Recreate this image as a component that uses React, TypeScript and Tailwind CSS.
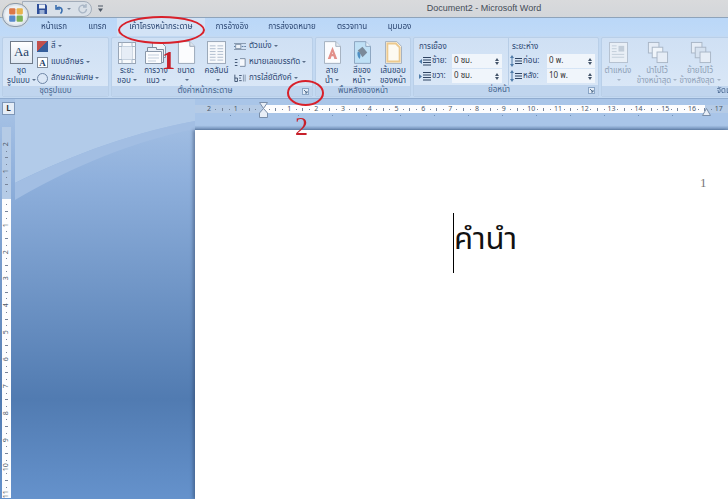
const thai = "font-['Tahoma','Noto_Sans_Thai','Noto_Sans','Liberation_Sans',sans-serif]"

const tabs = [
  { label: 'หน้าแรก', w: 'w-[48px]' },
  { label: 'แทรก', w: 'w-[39px]' },
  { label: 'เค้าโครงหน้ากระดาษ', w: 'w-[88px]' },
  { label: 'การอ้างอิง', w: 'w-[54px]' },
  { label: 'การส่งจดหมาย', w: 'w-[66px]' },
  { label: 'ตรวจทาน', w: 'w-[54px]' },
  { label: 'มุมมอง', w: 'w-[41px]' },
]

const hLabels = ['2', '1', '', '1', '2', '3', '4', '5', '6', '7', '8', '9', '10', '11', '12', '13', '14', '15', '16']
const vLabels = ['2', '1', '', '1', '2', '3', '4', '5', '6', '7', '8', '9', '10']

function MarginsIcon() {
  return (
    <svg viewBox="0 0 18 22" className="h-[22px] w-[18px]">
      <rect x="0.5" y="0.5" width="17" height="21" fill="#f7f9fc" stroke="#98a5b6" />
      <path d="M0.5 4.5h17M0.5 17.5h17M4 0.5v21M14 0.5v21" stroke="#a8b8ca" />
      <rect x="4" y="4.5" width="10" height="13" fill="#e6edf6" />
    </svg>
  )
}

function OrientationIcon() {
  return (
    <svg viewBox="0 0 24 24" className="h-[24px] w-[24px]">
      <path d="M8.5 1.5h9l4 4v11h-13z" fill="#f1f5fa" stroke="#8b99ab" />
      <path d="M3.5 6.5h9v2h7v13h-16z" fill="#e9eff7" stroke="#7f8c9e" />
      <path d="M1.5 10.5h16v12h-16z" fill="#fbfcfe" stroke="#8b99ab" />
      <path d="M4 14h11M4 17h11M4 20h8" stroke="#c3cfdd" />
    </svg>
  )
}

function SizeIcon() {
  return (
    <svg viewBox="0 0 20 24" className="h-[23px] w-[19px]">
      <path d="M1.5 0.5h12l5 5v18h-17z" fill="#fbfcfe" stroke="#98a5b6" />
      <path d="M13.5 0.5v5h5" fill="#dde5ef" stroke="#98a5b6" />
    </svg>
  )
}

function ColumnsIcon() {
  return (
    <svg viewBox="0 0 20 24" className="h-[23px] w-[19px]">
      <rect x="0.5" y="0.5" width="19" height="23" fill="#f7f9fc" stroke="#98a5b6" />
      <path d="M3 5h6M11 5h6M3 8h6M11 8h6M3 11h6M11 11h6M3 14h6M11 14h6M3 17h6M11 17h6M3 20h6M11 20h6" stroke="#aebccd" />
    </svg>
  )
}

function WatermarkIcon() {
  return (
    <svg viewBox="0 0 18 24" className="h-[23px] w-[17px]">
      <path d="M0.5 0.5h12l5 5v18h-17z" fill="#fbfcfe" stroke="#a2aebd" />
      <path d="M12.5 0.5v5h5" fill="#e3e9f1" stroke="#a2aebd" />
      <path d="M4 19L9 6l5 13h-3l-1-3H8l-1 3zM8.6 13.5h.9L9 11.5z" fill="#e2908a" />
    </svg>
  )
}

function PageColorIcon() {
  return (
    <svg viewBox="0 0 18 24" className="h-[23px] w-[17px]">
      <path d="M0.5 0.5h12l5 5v18h-17z" fill="#bfe0f5" stroke="#8aa3bd" />
      <path d="M12.5 0.5v5h5" fill="#e6f1fa" stroke="#8aa3bd" />
      <path d="M4 10l5-4 5 6-5 5z" fill="#7b8a99" />
      <path d="M4 11c-1 3 0 6 2 8 1-2 1-5 0-7z" fill="#4e8fc4" />
    </svg>
  )
}

function BorderIcon() {
  return (
    <svg viewBox="0 0 18 24" className="h-[23px] w-[17px]">
      <path d="M0.5 0.5h12l5 5v18h-17z" fill="#fdfaf2" stroke="#a2aebd" />
      <path d="M2.5 2.5h9l4 4v15h-13z" fill="none" stroke="#ecc98e" strokeWidth="2" />
    </svg>
  )
}

function LayeredIcon({ front }: { front: boolean }) {
  return (
    <svg viewBox="0 0 24 24" className="h-[23px] w-[23px]">
      <rect x="2.5" y="1.5" width="11" height="11" fill="#e6edf6" stroke="#a9b6c6" />
      <rect x="6.5" y="6.5" width="11" height="11" fill={front ? '#f0f5fa' : '#d6e2f0'} stroke="#a9b6c6" />
      <rect x="11.5" y="11.5" width="11" height="11" fill="#e6edf6" stroke="#a9b6c6" />
    </svg>
  )
}

function PositionIcon() {
  return (
    <svg viewBox="0 0 20 22" className="h-[21px] w-[19px]">
      <rect x="0.5" y="0.5" width="19" height="21" fill="#e9eff6" stroke="#b4c0cf" />
      <rect x="10" y="4" width="6" height="6" fill="#c2cdd9" />
      <path d="M3 4h5M3 7h5M3 10h5M3 13h13M3 16h13" stroke="#c2cdd9" />
    </svg>
  )
}

function IndentIcon({ right }: { right?: boolean }) {
  return (
    <svg viewBox="0 0 12 11" className="h-[11px] w-[12px]">
      <path d="M4 1.5h8M4 4h8M4 6.5h8M4 9h8" stroke="#2f4462" />
      <path d={right ? 'M0 3l3 2.5L0 8z' : 'M3 3L0 5.5 3 8z'} fill="#4f7ba8" />
    </svg>
  )
}

function SpacingIcon() {
  return (
    <svg viewBox="0 0 12 12" className="h-[12px] w-[12px]">
      <path d="M5 3.5h7M5 6h7M5 8.5h7" stroke="#2f4462" />
      <path d="M2 0l2 3H0zM2 12l2-3H0z" fill="#4f7ba8" />
      <path d="M2 3v6" stroke="#4f7ba8" />
    </svg>
  )
}

function Caret({ faded }: { faded?: boolean }) {
  return (
    <span
      className={`ml-[2px] inline-block h-0 w-0 border-x-[2px] border-t-[2px] border-x-transparent align-middle ${faded ? 'border-t-[#a5b4c6]' : 'border-t-[#5b6f8a]'}`}
    />
  )
}

// "▾" at the end of a label is drawn as a small caret
function Label({ text, faded }: { text: string; faded?: boolean }) {
  const hasCaret = text.endsWith('▾')
  return (
    <>
      {hasCaret ? text.slice(0, -1).trim() : text}
      {hasCaret && <Caret faded={faded} />}
    </>
  )
}

function GroupLabel({ text, launcher }: { text: string; launcher?: boolean }) {
  return (
    <div className={`relative h-[11px] bg-[#c0d5ee] text-center text-[8px] leading-[11px] text-[#46658f] ${launcher ? 'pr-[14px]' : ''}`}>
      {text}
      {launcher && (
        <svg viewBox="0 0 7 7" className="absolute right-[3px] top-[2px] h-[7px] w-[7px]">
          <rect x="0.5" y="0.5" width="6" height="6" fill="#e3ecf7" stroke="#8ba6c6" />
          <path d="M2 2l3 3M5 3v2H3" stroke="#54708f" fill="none" />
        </svg>
      )}
    </div>
  )
}

function Group({ w, label, launcher, children }: { w: string; label: string; launcher?: boolean; children: React.ReactNode }) {
  return (
    <div className={`${w} flex h-[60px] shrink-0 flex-col overflow-hidden rounded-[2px] border border-[#b9cfe8] bg-[linear-gradient(#cfe0f4,#dbe8f7)]`}>
      <div className="flex flex-1 px-[3px]">{children}</div>
      <GroupLabel text={label} launcher={launcher} />
    </div>
  )
}

function BigButton({ w, icon, lines, faded }: { w: string; icon: React.ReactNode; lines: string[]; faded?: boolean }) {
  return (
    <div className={`${w} flex shrink-0 flex-col items-center text-[8px] leading-[9.5px] ${faded ? 'text-[#8fa1b6]' : 'text-[#2b4672]'}`}>
      <div className="flex h-[29px] shrink-0 items-center">{icon}</div>
      {lines.map((l) => (
        <div key={l} className="whitespace-nowrap">
          <Label text={l} faded={faded} />
        </div>
      ))}
    </div>
  )
}

function SpinField({ icon, label, value, w, lw }: { icon: React.ReactNode; label: string; value: string; w: string; lw: string }) {
  return (
    <div className="flex h-[14px] items-center text-[8px] text-[#2b4672]">
      <span className="flex w-[13px] items-center">{icon}</span>
      <span className={`${lw} whitespace-nowrap`}>{label}</span>
      <div className={`${w} flex h-[14px] items-center justify-between bg-[#f0f5fb] pl-[2px] pr-[3px] text-[#333]`}>
        <span>{value}</span>
        <span className="flex flex-col gap-[1px]">
          <span className="h-0 w-0 border-x-[2px] border-b-[3px] border-x-transparent border-b-[#44546a]" />
          <span className="h-0 w-0 border-x-[2px] border-t-[3px] border-x-transparent border-t-[#44546a]" />
        </span>
      </div>
    </div>
  )
}

function SmallRow({ icon, text }: { icon: React.ReactNode; text: string }) {
  return (
    <div className="flex h-[16px] items-center gap-[3px] whitespace-nowrap text-[8px] text-[#2b4672]">
      {icon}
      <span>
        <Label text={text} />
      </span>
    </div>
  )
}

function HRuler() {
  return (
    <div className="flex h-[8px] overflow-hidden bg-[linear-gradient(to_right,#b5cbe6_68px,#fdfdfe_68px,#fdfdfe_510px,#b5cbe6_510px)] pl-[10.65px] text-[7px] leading-[8px] text-[#4d5a6b]">
      {hLabels.map((n, i) => (
        <div key={i} className="flex w-[26.8px] shrink-0 items-center text-center">
          <span className="w-1/4">{n}</span>
          <span className="flex w-1/4 justify-center"><span className="h-[1px] w-[1px] bg-[#77849a]" /></span>
          <span className="flex w-1/4 justify-center"><span className="h-[3px] w-[1px] bg-[#77849a]" /></span>
          <span className="flex w-1/4 justify-center"><span className="h-[1px] w-[1px] bg-[#77849a]" /></span>
        </div>
      ))}
      <span className="w-[7px] shrink-0 text-center">17</span>
    </div>
  )
}

function VRuler() {
  return (
    <div className="ml-[2px] flex h-[371px] w-[9px] flex-col items-center overflow-hidden bg-[linear-gradient(#b5cbe6_72px,#fdfdfe_72px)] pt-[14px] text-[7px] leading-[7px] text-[#4d5a6b]">
      {vLabels.map((n, i) => (
        <div key={i} className="flex h-[26.9px] w-full shrink-0 flex-col items-center">
          <span className="flex h-[6.7px] items-center -rotate-90">{n}</span>
          <span className="flex h-[6.7px] items-center"><span className="h-[1px] w-[1px] bg-[#77849a]" /></span>
          <span className="flex h-[6.7px] items-center"><span className="h-[1px] w-[3px] bg-[#77849a]" /></span>
          <span className="flex h-[6.7px] items-center"><span className="h-[1px] w-[1px] bg-[#77849a]" /></span>
        </div>
      ))}
      <span className="flex h-[6.7px] items-center -rotate-90">11</span>
    </div>
  )
}

export default function App() {
  return (
    <div className={`relative flex h-[499px] w-[728px] flex-col overflow-hidden bg-[#6490cb] ${thai}`}>
      {/* Title bar */}
      <div className="flex h-[18px] shrink-0 items-center justify-center border-b border-[#8ea3ba] bg-[linear-gradient(#d9dadc,#d3d6da)] pl-[240px] font-['Liberation_Sans',sans-serif] text-[9px] text-[#444c57]">
        Document2 - Microsoft Word
      </div>

      {/* Tabs */}
      <div className="flex h-[18px] shrink-0 items-center bg-[linear-gradient(#bad7f8,#c0daf7)] pl-[30px] text-[8px] text-[#2b4672] blur-[0.3px]">
        {tabs.map((t, i) => (
          <div
            key={t.label}
            className={`${t.w} flex h-full items-center justify-center whitespace-nowrap ${i === 2 ? 'bg-[#d3e3f6]' : ''}`}
          >
            {t.label}
          </div>
        ))}
      </div>

      {/* Ribbon */}
      <div className="flex h-[63px] shrink-0 gap-[2px] border-b border-[#90acd0] bg-[#c3d9f2] pl-[2px] pt-[1px] blur-[0.3px]">
        <Group w="w-[107px]" label="ชุดรูปแบบ">
          <BigButton
            w="w-[31px]"
            lines={['ชุด', 'รูปแบบ ▾']}
            icon={
              <div className="h-[23px] w-[23px] border border-[#6f7a89] bg-[linear-gradient(#fff,#dfe8f3)] text-center font-['Liberation_Serif',serif] text-[13px] leading-[20px] text-[#243f68]">
                Aa
              </div>
            }
          />
          <div className="flex flex-col">
            <SmallRow text="สี ▾" icon={<span className="h-[11px] w-[11px] bg-[linear-gradient(135deg,#c0504d_50%,#365f9c_50%)]" />} />
            <SmallRow text="แบบอักษร ▾" icon={<span className="h-[11px] w-[11px] border border-[#7f8a99] bg-white text-center font-['Liberation_Serif',serif] text-[9px] font-bold leading-[10px] text-[#243f68]">A</span>} />
            <SmallRow text="ลักษณะพิเศษ ▾" icon={<span className="h-[11px] w-[11px] rounded-full border border-[#6f86a6] bg-[#dbe7f6]" />} />
          </div>
        </Group>

        <Group w="w-[202px]" label="ตั้งค่าหน้ากระดาษ" launcher>
          <BigButton w="w-[24px]" lines={['ระยะ', 'ขอบ ▾']} icon={<MarginsIcon />} />
          <BigButton w="w-[34px]" lines={['การวาง', 'แนว ▾']} icon={<OrientationIcon />} />
          <BigButton w="w-[26px]" lines={['ขนาด', '▾']} icon={<SizeIcon />} />
          <BigButton w="w-[35px]" lines={['คอลัมน์', '▾']} icon={<ColumnsIcon />} />
          <div className="flex flex-col">
            <SmallRow
              text="ตัวแบ่ง ▾"
              icon={
                <svg viewBox="0 0 14 11" className="h-[11px] w-[12px]">
                  <path d="M0 2h14M0 9h14" stroke="#7e90a6" />
                  <path d="M0 5.5h14" stroke="#4f6f96" strokeDasharray="2 1" />
                  <rect x="2" y="3" width="6" height="5" fill="#eef3f9" stroke="#7e90a6" />
                </svg>
              }
            />
            <SmallRow
              text="หมายเลขบรรทัด ▾"
              icon={
                <svg viewBox="0 0 14 11" className="h-[11px] w-[12px]">
                  <path d="M1 2h3M1 5.5h3M1 9h3" stroke="#2f4462" />
                  <path d="M7 1h6v9H7" fill="#f5f8fc" stroke="#6e8098" />
                </svg>
              }
            />
            <SmallRow
              text="การใส่ยัติภังค์ ▾"
              icon={
                <svg viewBox="0 0 14 11" className="h-[11px] w-[12px]">
                  <path d="M1 1v8h3V5H1M6 2h3M6 5h2M6 8h3" stroke="#2f4462" fill="none" />
                  <path d="M11 1v8M13 1v8" stroke="#7e90a6" />
                </svg>
              }
            />
          </div>
        </Group>

        <Group w="w-[96px]" label="พื้นหลังของหน้า">
          <BigButton w="w-[26px]" lines={['ลาย', 'น้ำ ▾']} icon={<WatermarkIcon />} />
          <BigButton w="w-[34px]" lines={['สีของ', 'หน้า ▾']} icon={<PageColorIcon />} />
          <BigButton w="w-[28px]" lines={['เส้นขอบ', 'ของหน้า']} icon={<BorderIcon />} />
        </Group>

        <Group w="w-[186px]" label="ย่อหน้า" launcher>
          <div className="flex w-[89px] shrink-0 flex-col pl-[2px] pt-[3px]">
            <div className="h-[13px] text-[8px] leading-[12px] text-[#2b4672]">การเยื้อง</div>
            <div className="flex flex-col gap-[1px]">
              <SpinField icon={<IndentIcon />} label="ซ้าย:" value="0 ซม." w="w-[50px]" lw="w-[20px]" />
              <SpinField icon={<IndentIcon right />} label="ขวา:" value="0 ซม." w="w-[50px]" lw="w-[20px]" />
            </div>
          </div>
          <div className="ml-[2px] flex flex-col border-l border-[#b7cde6] pl-[1px] pt-[3px]">
            <div className="h-[13px] pl-[2px] text-[8px] leading-[12px] text-[#2b4672]">ระยะห่าง</div>
            <div className="flex flex-col gap-[1px]">
              <SpinField icon={<SpacingIcon />} label="ก่อน:" value="0 พ." w="w-[48px]" lw="w-[24px]" />
              <SpinField icon={<SpacingIcon />} label="หลัง:" value="10 พ." w="w-[48px]" lw="w-[24px]" />
            </div>
          </div>
        </Group>

        <Group w="w-[256px]" label="จัดเรียง">
          <BigButton faded w="w-[26px]" lines={['ตำแหน่ง', '▾']} icon={<PositionIcon />} />
          <BigButton faded w="w-[52px]" lines={['นำไปไว้', 'ข้างหน้าสุด ▾']} icon={<LayeredIcon front />} />
          <BigButton faded w="w-[34px]" lines={['ย้ายไปไว้', 'ข้างหลังสุด ▾']} icon={<LayeredIcon front={false} />} />
        </Group>
      </div>

      {/* Document area */}
      <div className="relative flex flex-1 overflow-hidden bg-[linear-gradient(#a9c4e6_0%,#8fb0dc_20%,#517bb1_75%,#6592cc_100%)]">
        <svg viewBox="0 0 195 130" preserveAspectRatio="none" className="absolute left-0 top-0 h-[130px] w-[195px]">
          <path d="M15 0H195V22C120 36 60 62 15 84Z" fill="#b2cbe9" />
          <path d="M15 84C60 62 120 36 195 22V30C120 45 60 75 15 101Z" fill="#a2bee3" />
        </svg>

        <div className="relative flex w-[195px] shrink-0 flex-col">
          <div className="ml-[2px] mt-[3px] flex h-[13px] w-[13px] items-center justify-center border border-[#7e97b8] bg-[#e5edf7] text-[8px] font-bold leading-none text-[#333]">
            L
          </div>
          <div className="mt-[12px]">
            <VRuler />
          </div>
        </div>

        <div className="relative flex min-w-0 flex-1 flex-col">
          <div className="h-[31px] shrink-0 bg-[linear-gradient(#a9c5e8_85%,#6f8fb8_100%)] pt-[6px]">
            <HRuler />
            <div className="ml-[1.5px] mt-[2px] h-[1px] w-[478px] bg-[repeating-linear-gradient(to_right,transparent_0,transparent_33px,#6f8fb8_33px,#6f8fb8_34px)]" />
          </div>
          <div className="flex-1 bg-white pl-[258px] pt-[83px] shadow-[-2px_0_3px_rgba(40,60,90,0.45)]">
            <div className="relative -top-[37px] left-[247px] h-0 font-['Liberation_Serif',serif] text-[13px] leading-[14px] text-[#777]">1</div>
            <div className="h-[60px] w-fit border-l border-black pt-[4px] text-[31px] leading-[46px] text-[#111]">คำนำ</div>
          </div>
        </div>
      </div>

      {/* Ruler indent markers */}
      <svg viewBox="0 0 9 16" className="absolute left-[259px] top-[102px] h-[16px] w-[9px]">
        <path d="M0.5 0.5h8L4.5 6.5 8.5 11v4.5h-8V11l4-4.5z" fill="#e8eef6" stroke="#7a8ea8" />
      </svg>
      <svg viewBox="0 0 9 8" className="absolute left-[702px] top-[108px] h-[8px] w-[9px]">
        <path d="M4.5 0.5l4 7h-8z" fill="#e8eef6" stroke="#7a8ea8" />
      </svg>

      {/* Office button and quick access, floating over the title bar */}
      <div className="absolute left-[22px] top-[1px] flex h-[16px] w-[70px] items-center rounded-r-full border border-[#a3adba] bg-[#d9e0e8] pl-[14px]">
        <svg viewBox="0 0 10 10" className="h-[10px] w-[10px]">
          <path d="M0 0h8.5L10 1.5V10H0z" fill="#2f4f99" />
          <rect x="2" y="0.5" width="6" height="4" fill="#e8eef6" />
          <rect x="2.5" y="6" width="5" height="4" fill="#9bb0d4" />
        </svg>
        <svg viewBox="0 0 10 10" className="ml-[7px] h-[10px] w-[10px]">
          <path d="M2 1v4h4" fill="none" stroke="#3a6fb0" strokeWidth="1.6" />
          <path d="M2.5 5C4 2.5 8 3 8 6.5c0 1-.5 2-1.5 3" fill="none" stroke="#3a6fb0" strokeWidth="1.6" />
        </svg>
        <span className="ml-[3px] h-0 w-0 border-x-[2px] border-t-[2px] border-x-transparent border-t-[#6d7f95]" />
        <svg viewBox="0 0 10 10" className="ml-[7px] h-[10px] w-[10px]">
          <path d="M7 2a3.8 3.8 0 1 0 1.5 3M8 0v3H5" fill="none" stroke="#a9b6c6" strokeWidth="1.4" />
        </svg>
      </div>
      <svg viewBox="0 0 7 8" className="absolute left-[97px] top-[5px] h-[8px] w-[7px]">
        <path d="M1 1h5" stroke="#4c5765" />
        <path d="M1 3.5h5L3.5 7z" fill="#4c5765" />
      </svg>
      <div className="absolute left-[2px] top-[3px] flex h-[24px] w-[27px] items-center justify-center rounded-full border border-[#8b98a8] bg-[radial-gradient(#edf1f5_55%,#a3b3c5)] shadow-[0_0_2px_#e8d9b8]">
        <svg viewBox="0 0 14 14" className="h-[16px] w-[16px] opacity-85">
          <rect x="1" y="1" width="5.5" height="5.5" rx="1" fill="#d9622b" />
          <rect x="7.5" y="1" width="5.5" height="5.5" rx="1" fill="#e6a92f" />
          <rect x="1" y="7.5" width="5.5" height="5.5" rx="1" fill="#3f78c4" />
          <rect x="7.5" y="7.5" width="5.5" height="5.5" rx="1" fill="#6aa83c" />
        </svg>
      </div>

      {/* Red annotations */}
      <div className="absolute left-[118px] top-[16px] h-[28px] w-[87px] rounded-[50%] border-2 border-[#d8202a]" />
      <div className="absolute left-[287px] top-[80px] h-[26px] w-[37px] rounded-[50%] border-2 border-[#d8202a]" />
      <span className="absolute left-[162px] top-[47px] font-['Liberation_Serif',serif] text-[26px] font-bold leading-[28px] text-[#c8202a]">1</span>
      <span className="absolute left-[295px] top-[113px] font-['Liberation_Serif',serif] text-[26px] leading-[28px] text-[#c8202a]">2</span>
    </div>
  )
}
